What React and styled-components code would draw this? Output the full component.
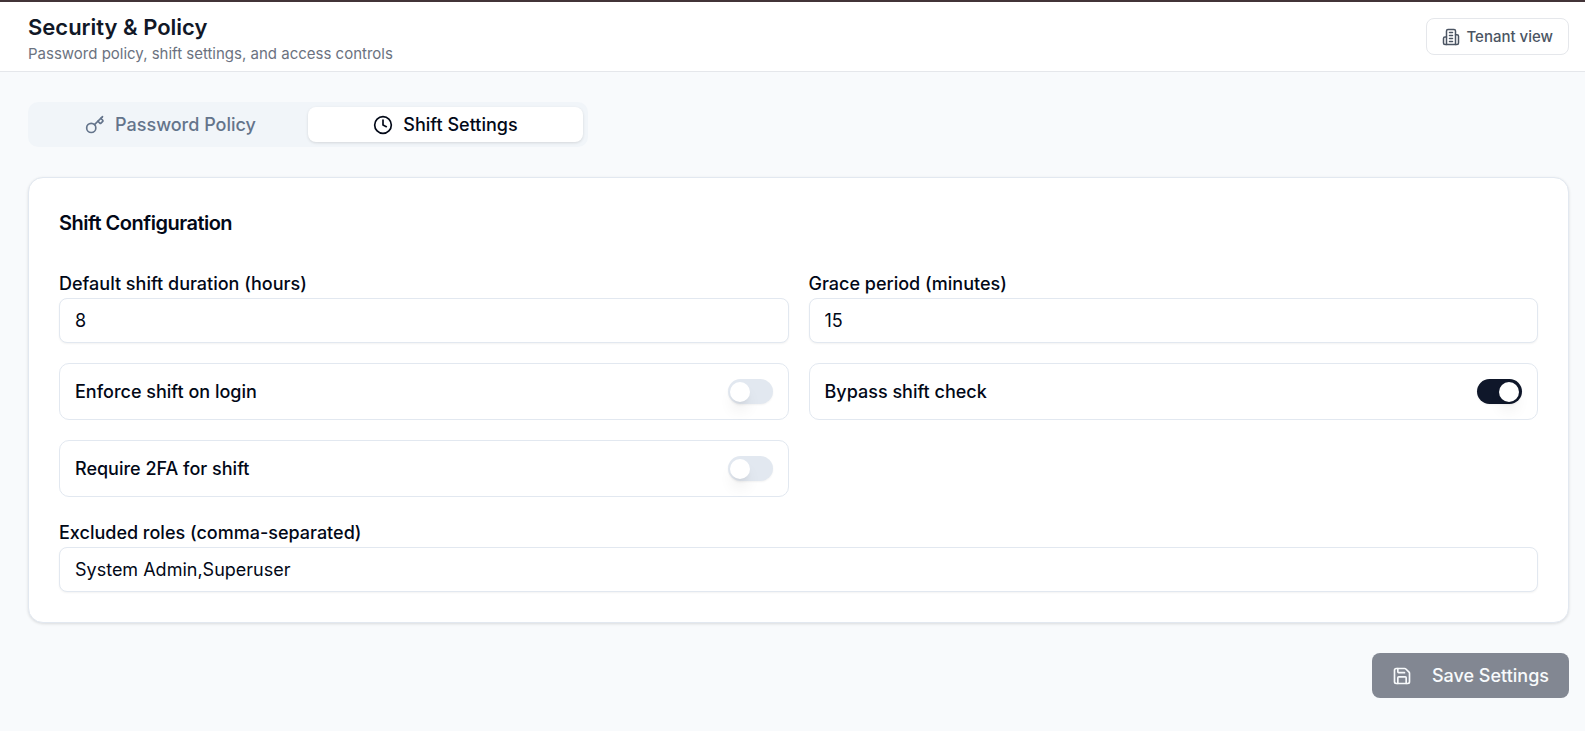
import { useState } from 'react'
import styled, { createGlobalStyle } from 'styled-components'
import { Clock, Key, Save } from 'lucide-react'

const GlobalStyle = createGlobalStyle`
    *, *::before, *::after {
        box-sizing: border-box;
    }
    body {
        margin: 0;
        background-color: #f8fafc;
        color: #020817;
        font-family: Inter, "Liberation Sans", sans-serif;
        font-size: 18px;
        line-height: 25px;
    }
    button, input {
        font: inherit;
        color: inherit;
    }
`

const Page = styled.div`
    min-height: 100vh;
    border-top: 2px solid #423438;
`

const Header = styled.header`
    display: flex;
    align-items: center;
    justify-content: space-between;
    padding: 8px 16px 8px 28px;
    background-color: white;
    border-bottom: 1px solid #e5e7eb;
`

const Title = styled.h1`
    margin: 0;
    font-size: 22px;
    font-weight: 600;
    line-height: 34px;
    color: #111827;
`

const Subtitle = styled.p`
    margin: 0;
    font-size: 15px;
    line-height: 19px;
    color: #6b7280;
`

const TenantButton = styled.button`
    display: flex;
    align-items: center;
    gap: 7px;
    height: 37px;
    padding: 0 15px;
    font-size: 15px;
    font-weight: 500;
    color: #4b5563;
    background-color: white;
    border: 1px solid #e5e7eb;
    border-radius: 8px;
    cursor: pointer;
`

const Main = styled.main`
    display: flex;
    flex-direction: column;
    gap: 30px;
    padding: 30px 16px 30px 28px;
`

const Tabs = styled.div`
    display: grid;
    grid-template-columns: 1fr 1fr;
    width: 100%;
    max-width: 560px;
    padding: 5px;
    background-color: #f1f5f9;
    border-radius: 10px;
`

const Tab = styled.button`
    display: flex;
    align-items: center;
    justify-content: center;
    gap: 10px;
    height: 35px;
    font-weight: 500;
    color: ${props => props.$active ? "#020817" : "#64748b"};
    background-color: ${props => props.$active ? "white" : "transparent"};
    box-shadow: ${props => props.$active ? "0 1px 3px rgba(0, 0, 0, 0.12)" : "none"};
    border: none;
    border-radius: 8px;
    cursor: pointer;
`

const Card = styled.section`
    padding: 30px;
    background-color: white;
    border: 1px solid #e2e8f0;
    border-radius: 15px;
    box-shadow: 0 1px 3px rgba(0, 0, 0, 0.12);
`

const CardTitle = styled.h2`
    margin: 0 0 35px;
    font-size: 20px;
    font-weight: 600;
    line-height: 30px;
    letter-spacing: -0.025em;
`

const Fields = styled.div`
    display: grid;
    grid-template-columns: 1fr 1fr;
    gap: 20px;
    margin-bottom: 25px;
`

const Field = styled.div`
    display: flex;
    flex-direction: column;
    gap: 4px;
`

const Label = styled.label`
    font-weight: 500;
    line-height: 21px;
`

const Input = styled.input`
    width: 100%;
    height: 45px;
    padding: 0 15px;
    background-color: white;
    border: 1px solid #e2e8f0;
    border-radius: 8px;
    box-shadow: 0 1px 2px rgba(0, 0, 0, 0.05);
`

const SwitchRow = styled.div`
    display: flex;
    align-items: center;
    justify-content: space-between;
    padding: 15px;
    border: 1px solid #e2e8f0;
    border-radius: 10px;
`

const Switch = styled.input`
    appearance: none;
    display: flex;
    align-items: center;
    width: 45px;
    height: 25px;
    margin: 0;
    padding: 0 3px 0 2px;
    background-color: #e2e8f0;
    border-radius: 13px;
    box-shadow: 0 1px 2px rgba(0, 0, 0, 0.05);
    cursor: pointer;

    &::before {
        content: "";
        width: 20px;
        height: 20px;
        background-color: white;
        border-radius: 50%;
        box-shadow: 0 10px 15px -3px rgba(0, 0, 0, 0.1), 0 4px 6px -4px rgba(0, 0, 0, 0.1);
    }

    &:checked {
        justify-content: flex-end;
        background-color: #0f172a;
    }
`

const Actions = styled.div`
    display: flex;
    justify-content: flex-end;
`

const SaveButton = styled.button`
    display: flex;
    align-items: center;
    gap: 20px;
    height: 45px;
    padding: 0 20px;
    font-weight: 500;
    color: #f8fafc;
    background-color: #0f172a;
    border: none;
    border-radius: 8px;

    &:disabled {
        opacity: 0.5;
    }
`

const BuildingIcon = () => (
    <svg width="18" height="18" viewBox="0 0 24 24" fill="none" stroke="currentColor" strokeWidth="2" strokeLinecap="round" strokeLinejoin="round" aria-hidden="true">
        <path d="M6 22V4a2 2 0 0 1 2-2h8a2 2 0 0 1 2 2v18Z" />
        <path d="M6 12H4a2 2 0 0 0-2 2v6a2 2 0 0 0 2 2h2" />
        <path d="M18 9h2a2 2 0 0 1 2 2v9a2 2 0 0 1-2 2h-2" />
        <path d="M10 6h4" />
        <path d="M10 10h4" />
        <path d="M10 14h4" />
        <path d="M10 18h4" />
    </svg>
)

const SwitchField = ({ id, label, checked, onChange }) => (
    <SwitchRow>
        <Label htmlFor={id}>{label}</Label>
        <Switch id={id} type="checkbox" role="switch" checked={checked} onChange={e => onChange(e.target.checked)} />
    </SwitchRow>
)

const App = () => {
    const [tab, setTab] = useState("shift")
    const [enforce, setEnforce] = useState(false)
    const [bypass, setBypass] = useState(true)
    const [twoFactor, setTwoFactor] = useState(false)

    return (
        <Page>
            <GlobalStyle />
            <Header>
                <div>
                    <Title>Security &amp; Policy</Title>
                    <Subtitle>Password policy, shift settings, and access controls</Subtitle>
                </div>
                <TenantButton type="button">
                    <BuildingIcon />
                    Tenant view
                </TenantButton>
            </Header>
            <Main>
                <Tabs role="tablist">
                    <Tab type="button" role="tab" aria-selected={tab === "password"} $active={tab === "password"} onClick={() => setTab("password")}>
                        <Key size={20} />
                        Password Policy
                    </Tab>
                    <Tab type="button" role="tab" aria-selected={tab === "shift"} $active={tab === "shift"} onClick={() => setTab("shift")}>
                        <Clock size={20} />
                        Shift Settings
                    </Tab>
                </Tabs>
                <Card>
                    <CardTitle>Shift Configuration</CardTitle>
                    <Fields>
                        <Field>
                            <Label htmlFor="duration">Default shift duration (hours)</Label>
                            <Input id="duration" inputMode="numeric" defaultValue="8" />
                        </Field>
                        <Field>
                            <Label htmlFor="grace">Grace period (minutes)</Label>
                            <Input id="grace" inputMode="numeric" defaultValue="15" />
                        </Field>
                        <SwitchField id="enforce" label="Enforce shift on login" checked={enforce} onChange={setEnforce} />
                        <SwitchField id="bypass" label="Bypass shift check" checked={bypass} onChange={setBypass} />
                        <SwitchField id="two-factor" label="Require 2FA for shift" checked={twoFactor} onChange={setTwoFactor} />
                    </Fields>
                    <Field>
                        <Label htmlFor="roles">Excluded roles (comma-separated)</Label>
                        <Input id="roles" defaultValue="System Admin,Superuser" />
                    </Field>
                </Card>
                <Actions>
                    <SaveButton type="button" disabled>
                        <Save size={20} />
                        Save Settings
                    </SaveButton>
                </Actions>
            </Main>
        </Page>
    )
}

export default App
